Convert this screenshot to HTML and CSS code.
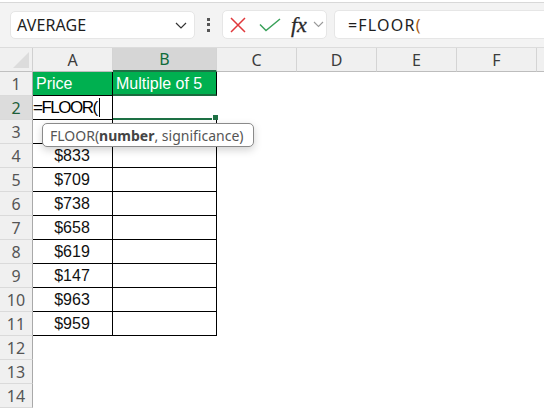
FILE: index.html
```html
<!DOCTYPE html>
<html>
<head>
<meta charset="utf-8">
<link rel="stylesheet" href="styles.css">
</head>
<body>
<div class="app">
  <div class="topline"></div>
  <div class="toolbar">
    <div class="namebox">
      <span class="name">AVERAGE</span>
      <svg class="chev" width="12" height="7" viewBox="0 0 12 7"><polyline points="1,1 6,6 11,1" fill="none" stroke="#333" stroke-width="1.2"/></svg>
    </div>
    <div class="dots"><i></i><i></i><i></i></div>
    <div class="fnbox">
      <svg width="16" height="16" viewBox="0 0 16 16"><path d="M1 1 L15 15 M15 1 L1 15" stroke="#e0383c" stroke-width="1.5" fill="none"/></svg>
      <svg width="22" height="14" viewBox="0 0 22 14"><polyline points="1,6.5 7,12.5 21,1" fill="none" stroke="#3aa15a" stroke-width="1.5"/></svg>
      <span class="fx">fx</span>
      <svg width="11" height="7" viewBox="0 0 11 7"><polyline points="1,1 5.5,5.5 10,1" fill="none" stroke="#9a9a9a" stroke-width="1.1"/></svg>
    </div>
    <div class="formula">=FLOOR<span class="paren">(</span></div>
  </div>
  <div class="sheet">
    <div class="row head">
      <div class="corner"><svg width="18" height="18" viewBox="0 0 18 18"><polygon points="17,1 17,17 1,17" fill="#dcdcdc"/></svg></div>
      <div class="ch w80">A</div>
      <div class="ch w104 sel">B</div>
      <div class="ch w80">C</div>
      <div class="ch w80">D</div>
      <div class="ch w80">E</div>
      <div class="ch w80">F</div>
      <div class="ch rest"></div>
    </div>
    <div class="row">
      <div class="rh">1</div>
      <div class="c w80 t green">Price</div>
      <div class="c w104 t green b1">Multiple of 5</div>
    </div>
    <div class="row">
      <div class="rh selr">2</div>
      <div class="c w80 t edit">=FLOOR(<span class="cursor"></span></div>
      <div class="c w104 b2"><span class="handle"></span></div>
    </div>
    <div class="row"><div class="rh">3</div><div class="c w80 t num"></div><div class="c w104 t"></div></div>
    <div class="row"><div class="rh">4</div><div class="c w80 t num">$833</div><div class="c w104 t"></div></div>
    <div class="row"><div class="rh">5</div><div class="c w80 t num">$709</div><div class="c w104 t"></div></div>
    <div class="row"><div class="rh">6</div><div class="c w80 t num">$738</div><div class="c w104 t"></div></div>
    <div class="row"><div class="rh">7</div><div class="c w80 t num">$658</div><div class="c w104 t"></div></div>
    <div class="row"><div class="rh">8</div><div class="c w80 t num">$619</div><div class="c w104 t"></div></div>
    <div class="row"><div class="rh">9</div><div class="c w80 t num">$147</div><div class="c w104 t"></div></div>
    <div class="row"><div class="rh">10</div><div class="c w80 t num">$963</div><div class="c w104 t"></div></div>
    <div class="row"><div class="rh">11</div><div class="c w80 t num">$959</div><div class="c w104 t"></div></div>
    <div class="row"><div class="rh">12</div></div>
    <div class="row"><div class="rh">13</div></div>
    <div class="row"><div class="rh">14</div></div>
    <div class="tip">FLOOR(<b>number</b>, significance)</div>
  </div>
</div>
</body>
</html>
```
FILE: styles.css
```css
html, body { margin: 0; padding: 0; }
body { width: 544px; height: 408px; overflow: hidden; background: #fff; font-family: "Noto Sans", sans-serif; }
.app { width: 544px; height: 408px; overflow: hidden; }
.topline { height: 2px; background: #fff; border-bottom: 1px solid #d8d8d8; }
.toolbar { height: 45px; background: #f3f3f3; border-bottom: 1px solid #dcdcdc; display: flex; align-items: center; padding-left: 10px; box-sizing: border-box; }
.namebox { width: 185px; height: 28px; box-sizing: border-box; background: #fff; border: 1px solid #e6e6e6; border-radius: 5px; display: flex; align-items: center; justify-content: space-between; padding: 0 7px 0 6px; margin-top: -1px; }
.name { font-size: 16px; color: #1e1e1e; letter-spacing: 0.1px; }
.chev { margin-top: 1px; }
.dots { width: 27px; display: flex; flex-direction: column; align-items: center; gap: 2.5px; margin-top: -1px; }
.dots i { display: block; width: 3px; height: 3px; background: #555; }
.fnbox { width: 105px; height: 29px; box-sizing: border-box; background: #fff; border: 1px solid #e6e6e6; border-radius: 5px; display: flex; align-items: center; padding-left: 7px; gap: 11px; margin-top: -1px; }
.fnbox svg:nth-child(2) { margin-left: 2px; margin-top: 1px; }
.fx { font-family: "Liberation Serif", serif; font-style: italic; font-size: 22px; color: #2a2a2a; margin-left: -1px; margin-right: -5px; line-height: 1; -webkit-text-stroke: 0.3px #2a2a2a; }
.formula { margin-left: 7px; flex: 1; height: 29px; box-sizing: border-box; background: #fff; border: 1px solid #e6e6e6; border-right: none; border-radius: 5px 0 0 5px; margin-top: -1px; display: flex; align-items: center; padding-left: 13px; font-size: 16px; letter-spacing: 1.2px; color: #1e1e1e; }
.paren { color: #a85a12; }
.sheet { position: relative; }
.row { display: flex; height: 24px; }
.head { height: 24px; }
.corner { height: 24px; box-sizing: border-box; background: #f0f0f0; border-right: 1px solid #d0d0d0; border-bottom: 1px solid #c0c0c0; display: flex; align-items: flex-end; justify-content: flex-end; padding: 0 2px 2px 0; width: 33px; }
.ch { height: 24px; box-sizing: border-box; background: #f0f0f0; border-right: 1px solid #d4d4d4; border-bottom: 1px solid #bdbdbd; font-size: 16px; color: #3c3c3c; display: flex; align-items: center; justify-content: center; }
.ch.sel { background: #d6d6d6; color: #0f6b3a; border-bottom: 2px solid #1e7145; }
.ch.rest { flex: 1; border-right: none; }
.w80 { width: 80px; }
.w104 { width: 104px; }
.rh { width: 33px; height: 24px; box-sizing: border-box; background: #f0f0f0; border-right: 1px solid #a9a9a9; border-bottom: 1px solid #dadada; font-size: 16px; color: #555; display: flex; align-items: center; justify-content: center; flex-shrink: 0; }
.rh.selr { background: #dcdcdc; color: #1e5e3a; }
.c { height: 24px; box-sizing: border-box; position: relative; font-family: "Liberation Sans", Arial, sans-serif; font-size: 16px; color: #111; display: flex; align-items: center; }
.c.t { border-right: 1px solid #000; border-bottom: 1px solid #000; }
.green { background: #00b050; color: #fff; padding-left: 3px; padding-top: 1px; }
.b1 { border-bottom: 2px solid #1a6b3e !important; }
.num { justify-content: center; padding-right: 1px; }
.edit { font-size: 17px; letter-spacing: -1.5px; color: #000; padding-left: 0; }
.cursor { display: inline-block; width: 1px; height: 19px; background: #000; margin-left: 2px; }
.b2 { border-bottom: 2px solid #1e7145; }
.handle { position: absolute; right: -2px; bottom: -3px; width: 5px; height: 5px; background: #1e7145; border: 1px solid #fff; box-sizing: content-box; }
.tip { position: absolute; left: 42px; top: 75px; width: 212px; height: 24px; box-sizing: border-box; background: #fff; border: 1px solid #8a8a8a; border-radius: 5px; box-shadow: 0 3px 8px rgba(0,0,0,0.18); font-size: 14px; color: #555; display: flex; align-items: center; padding-left: 7px; white-space: nowrap; }
.tip b { color: #444; font-weight: 700; }
```
